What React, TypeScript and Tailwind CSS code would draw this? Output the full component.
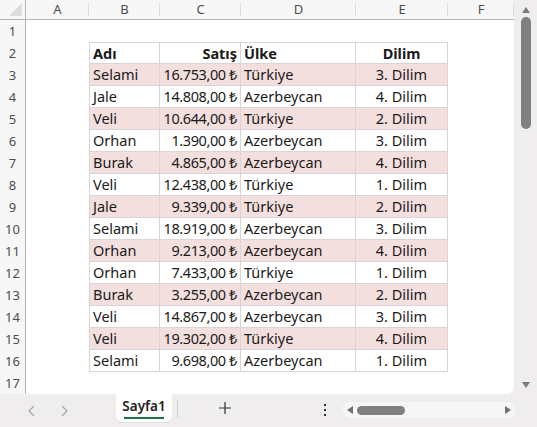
import React from 'react';

const rows: [string, string, string, string][] = [
    ['Selami', '16.753,00 ₺', 'Türkiye', '3. Dilim'],
    ['Jale', '14.808,00 ₺', 'Azerbeycan', '4. Dilim'],
    ['Veli', '10.644,00 ₺', 'Türkiye', '2. Dilim'],
    ['Orhan', '1.390,00 ₺', 'Azerbeycan', '3. Dilim'],
    ['Burak', '4.865,00 ₺', 'Azerbeycan', '4. Dilim'],
    ['Veli', '12.438,00 ₺', 'Türkiye', '1. Dilim'],
    ['Jale', '9.339,00 ₺', 'Türkiye', '2. Dilim'],
    ['Selami', '18.919,00 ₺', 'Azerbeycan', '3. Dilim'],
    ['Orhan', '9.213,00 ₺', 'Azerbeycan', '4. Dilim'],
    ['Orhan', '7.433,00 ₺', 'Türkiye', '1. Dilim'],
    ['Burak', '3.255,00 ₺', 'Azerbeycan', '2. Dilim'],
    ['Veli', '14.867,00 ₺', 'Azerbeycan', '3. Dilim'],
    ['Veli', '19.302,00 ₺', 'Türkiye', '4. Dilim'],
    ['Selami', '9.698,00 ₺', 'Azerbeycan', '1. Dilim'],
];

const letters = ['A', 'B', 'C', 'D', 'E', 'F'];

function Cell({ text, align, bold, pink, first, top, tight }: { text: string; align: string; bold?: boolean; pink?: boolean; first?: boolean; top?: boolean; tight?: boolean }) {
    return (
        <div
            className={`flex items-center px-[3px] border-r border-b border-[#d6d6d6] overflow-hidden whitespace-nowrap ${align} ${bold ? 'font-bold' : ''} ${pink ? 'bg-[#f4dfdf]' : 'bg-white'} ${first ? 'border-l' : ''} ${top ? 'border-t' : ''} ${tight ? 'tracking-[-0.4px]' : ''}`}
        >
            {text}
        </div>
    );
}

export default function App() {
    return (
        <div className="w-[537px] h-[427px] bg-[#efeded] flex flex-col overflow-hidden text-[#1a1a1a]" style={{ fontFamily: '"Noto Sans", "Open Sans", sans-serif' }}>
            <div className="flex h-[394px]">
                {/* sheet */}
                <div className="w-[514px] h-[394px] bg-white rounded-br-[8px] overflow-hidden grid grid-cols-[26px_63px_71px_81px_115px_92px_66px] grid-rows-[20px_repeat(17,22px)] text-[14.5px] leading-none">
                    <div className="bg-[#f7f7f7] border-r border-b border-[#b5b5b5] relative">
                        <div className="absolute right-[3px] bottom-[3px] w-0 h-0 border-l-[13px] border-l-transparent border-b-[13px] border-b-[#dcdcdc]" />
                    </div>
                    {letters.map((l) => (
                        <div key={l} className="bg-[#f7f7f7] border-b border-[#b5b5b5] flex items-center justify-center text-[13px] text-[#4d4d4d] relative">
                            {l}
                            <div className="absolute right-0 top-[3px] bottom-[3px] w-px bg-[#dcdcdc]" />
                        </div>
                    ))}
                    {Array.from({ length: 17 }).map((_, i) => {
                        const r = i + 1;
                        const cells: React.ReactNode[] = [];
                        cells.push(
                            <div key={`h${r}`} className="bg-[#f7f7f7] border-r border-[#b5b5b5] flex items-center justify-center text-[13px] text-[#4d4d4d]">
                                {r}
                            </div>
                        );
                        cells.push(<div key={`a${r}`} />);
                        if (r === 2) {
                            cells.push(<Cell key="b2" text="Adı" align="justify-start" bold first top />);
                            cells.push(<Cell key="c2" text="Satış" align="justify-end" bold top />);
                            cells.push(<Cell key="d2" text="Ülke" align="justify-start" bold top />);
                            cells.push(<Cell key="e2" text="Dilim" align="justify-center" bold top />);
                        } else if (r >= 3 && r <= 16) {
                            const d = rows[r - 3];
                            const pink = r % 2 === 1;
                            cells.push(<Cell key={`b${r}`} text={d[0]} align="justify-start" pink={pink} first />);
                            cells.push(<Cell key={`c${r}`} text={d[1]} align="justify-end" pink={pink} tight />);
                            cells.push(<Cell key={`d${r}`} text={d[2]} align="justify-start" pink={pink} />);
                            cells.push(<Cell key={`e${r}`} text={d[3]} align="justify-center" pink={pink} />);
                        } else {
                            cells.push(<div key={`b${r}`} />, <div key={`c${r}`} />, <div key={`d${r}`} />, <div key={`e${r}`} />);
                        }
                        cells.push(<div key={`f${r}`} />);
                        return cells;
                    })}
                </div>
                {/* vertical scrollbar */}
                <div className="w-[23px] flex flex-col items-center pt-[4px] pb-[2px]">
                    <svg width="10" height="8" viewBox="0 0 10 8" className="mt-[2px]"><path d="M5 1 L9 7 L1 7 Z" fill="#7a7a7a" /></svg>
                    <div className="w-[10px] h-[112px] mt-[3px] rounded-full bg-[#808080]" />
                    <div className="flex-1" />
                    <svg width="10" height="8" viewBox="0 0 10 8" className="mb-[3px]"><path d="M1 1 L9 1 L5 7 Z" fill="#7a7a7a" /></svg>
                </div>
            </div>
            {/* bottom bar */}
            <div className="flex-1 flex items-start relative">
                <div className="w-[116px] h-[33px] flex items-center gap-[22px] pl-[27px] text-[#a8a8a8]">
                    <svg width="10" height="14" viewBox="0 0 10 14"><path d="M7 2 L2 7 L7 12" fill="none" stroke="#a8a8a8" strokeWidth="1.3" /></svg>
                    <svg width="10" height="14" viewBox="0 0 10 14"><path d="M3 2 L8 7 L3 12" fill="none" stroke="#a8a8a8" strokeWidth="1.3" /></svg>
                </div>
                <div className="w-[56px] h-[28px] bg-white rounded-b-[6px] flex flex-col items-center justify-center shadow-[0_1px_1px_rgba(0,0,0,0.06)]">
                    <span className="text-[13.5px] font-semibold text-[#222] leading-none mt-[3px]">Sayfa1</span>
                    <div className="w-[40px] h-[2px] bg-[#1e7145] mt-[4px]" />
                </div>
                <div className="w-px h-[18px] bg-[#cfcfcf] ml-[5px] mt-[6px]" />
                <div className="ml-[40px] mt-[7px]">
                    <svg width="14" height="14" viewBox="0 0 14 14"><path d="M7 1 V13 M1 7 H13" stroke="#333" strokeWidth="1.2" /></svg>
                </div>
                <div className="ml-[92px] mt-[10px] flex flex-col gap-[3px]">
                    <div className="w-[2px] h-[2px] bg-[#333]" />
                    <div className="w-[2px] h-[2px] bg-[#333]" />
                    <div className="w-[2px] h-[2px] bg-[#333]" />
                </div>
                <div className="ml-[16px] mt-[8px] w-[174px] h-[16px] rounded-full bg-[#f7f6f6] flex items-center px-[4px]">
                    <svg width="8" height="10" viewBox="0 0 8 10"><path d="M7 1 L1 5 L7 9 Z" fill="#707070" /></svg>
                    <div className="ml-[3px] w-[48px] h-[9px] rounded-full bg-[#808080]" />
                    <div className="flex-1" />
                    <svg width="8" height="10" viewBox="0 0 8 10"><path d="M1 1 L7 5 L1 9 Z" fill="#707070" /></svg>
                </div>
            </div>
        </div>
    );
}
